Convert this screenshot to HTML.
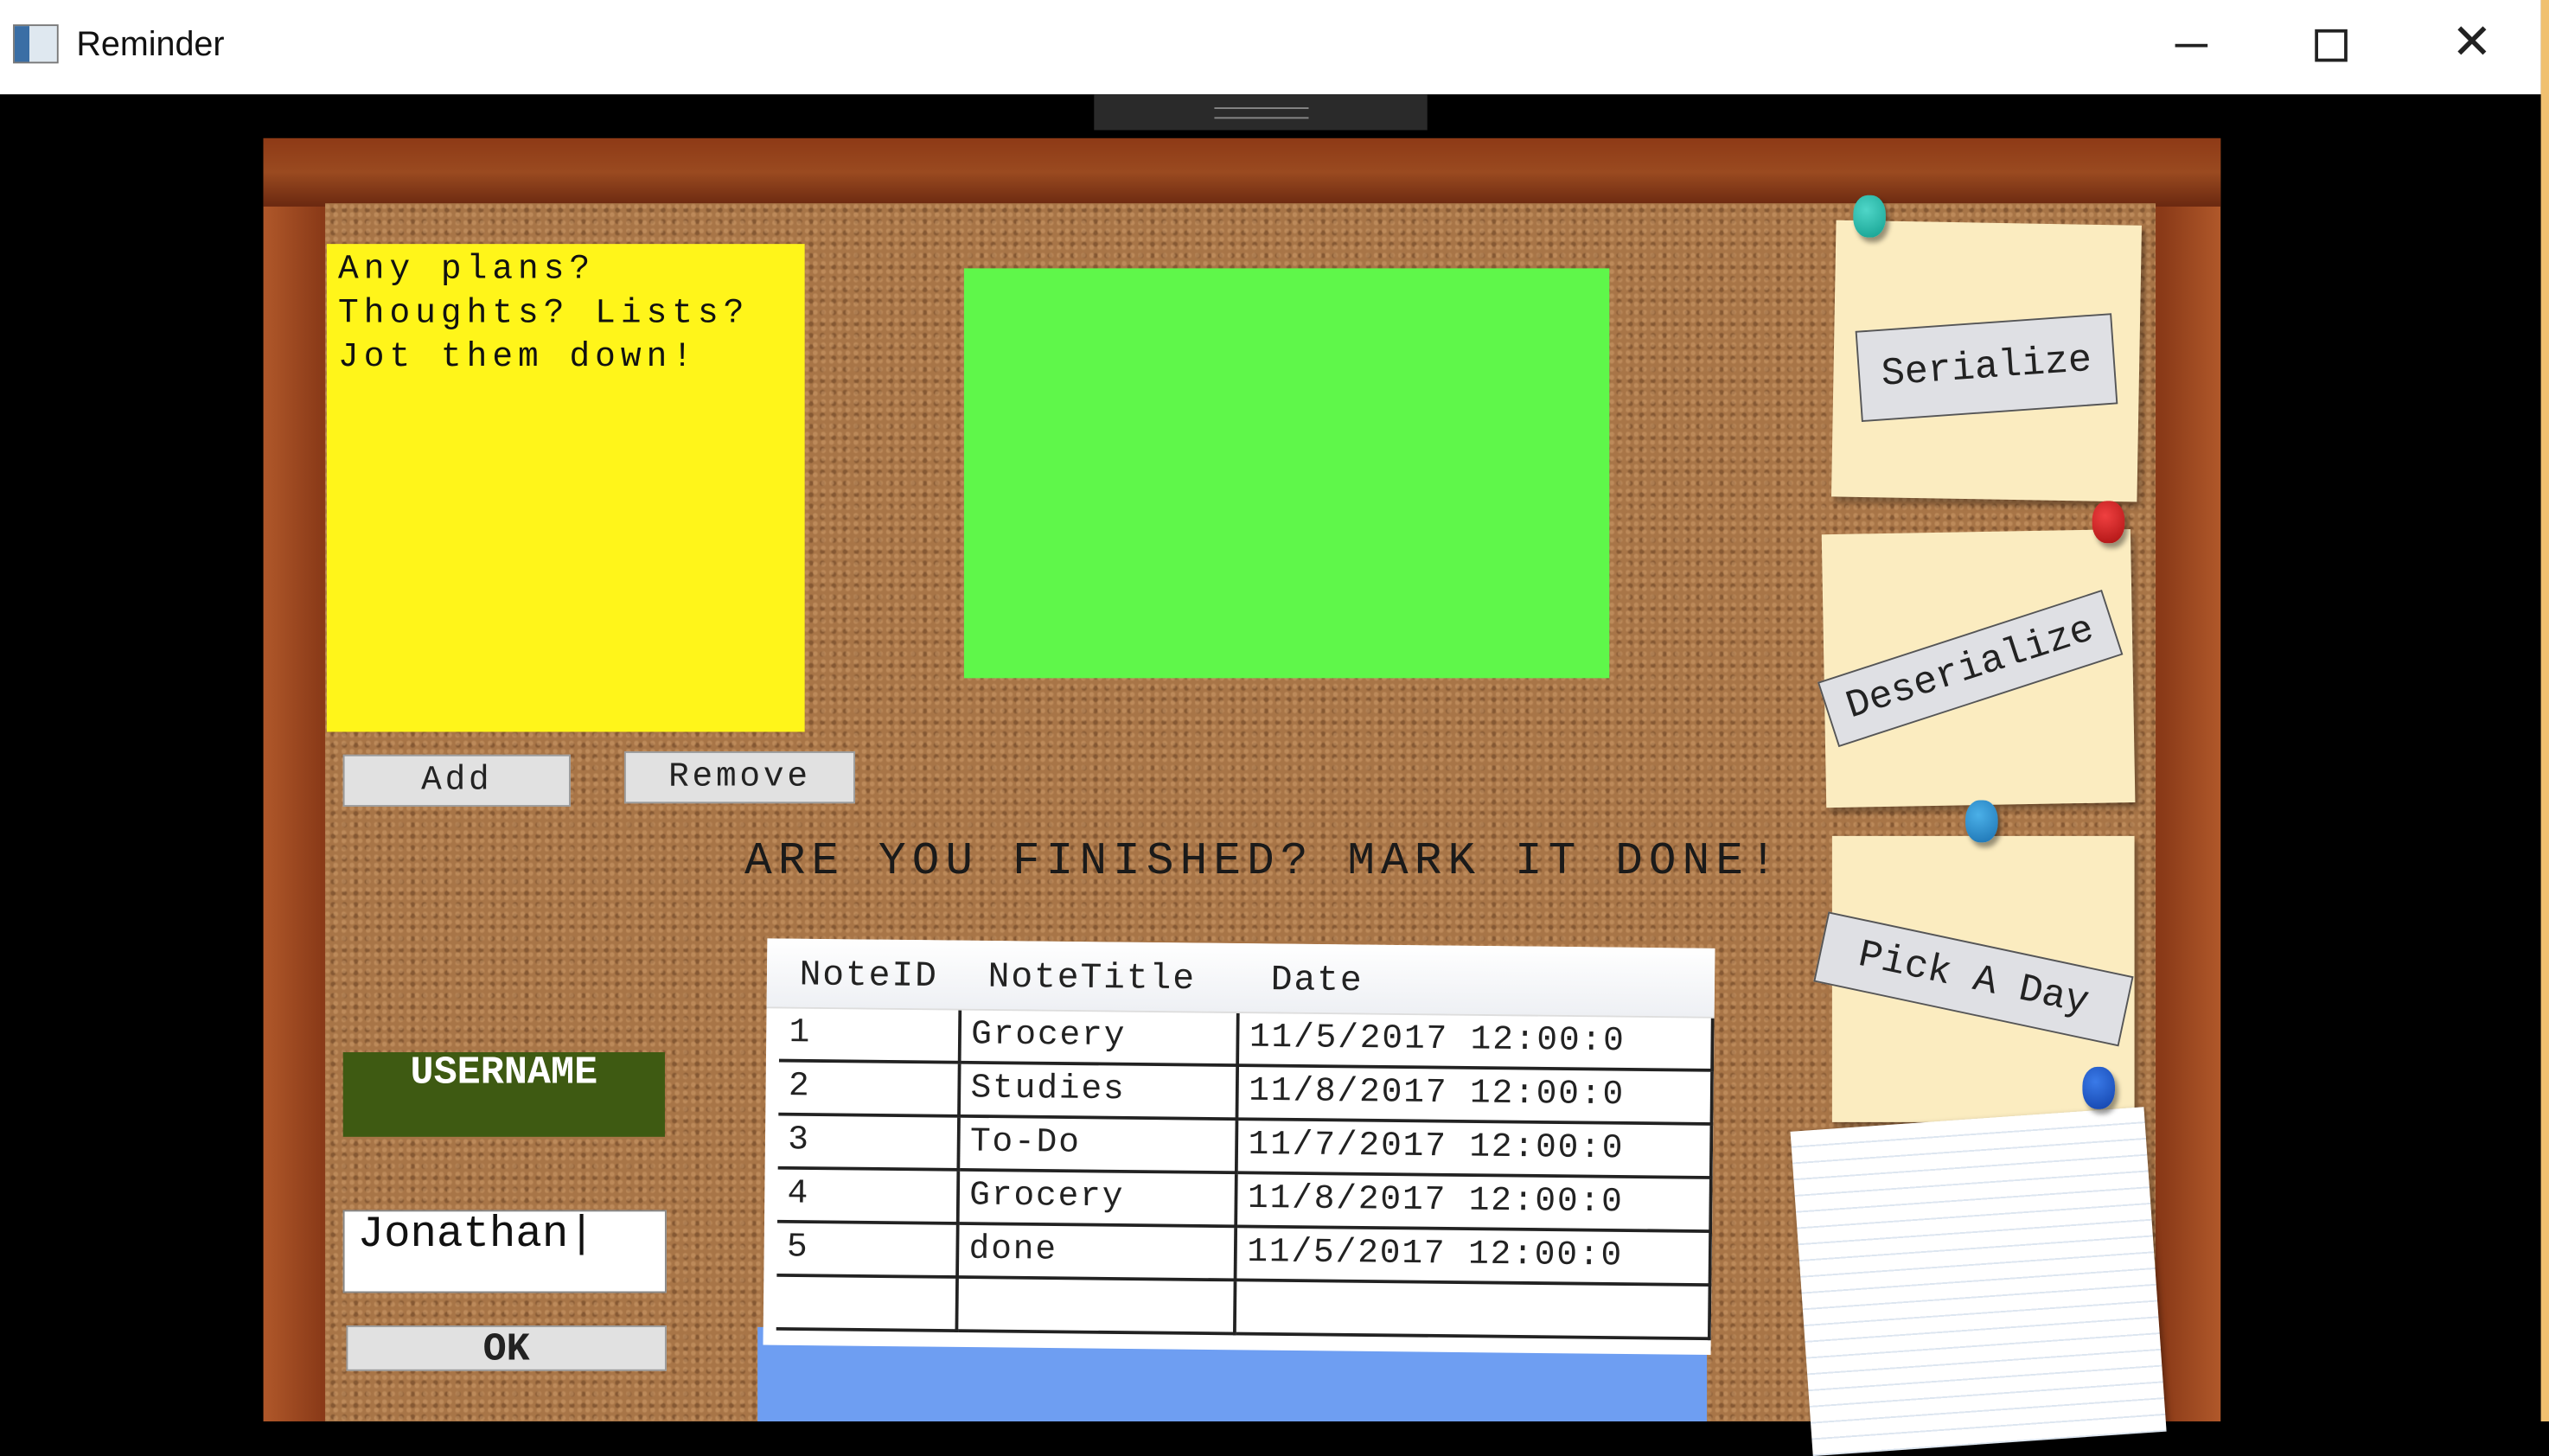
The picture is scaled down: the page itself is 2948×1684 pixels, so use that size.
<!DOCTYPE html>
<html><head><meta charset="utf-8"><style>
html,body{margin:0;padding:0;overflow:hidden;background:#000}
#w{position:absolute;left:0;top:0;width:1568px;height:874px;transform:scale(1.8801,1.881);transform-origin:0 0;background:#000;font-family:"Liberation Mono",monospace}
.a{position:absolute}
.btn{position:absolute;background:#e1e1e1;border:1px solid #9a9a9a;box-sizing:border-box;text-align:center;color:#222;font-family:"Liberation Mono",monospace}
.paper{position:absolute;background:#fbecc0;box-shadow:2px 3px 4px rgba(0,0,0,.35)}
.pin{position:absolute;width:20px;height:26px;border-radius:45%;box-shadow:2px 3px 3px rgba(0,0,0,.4)}
td{border-bottom:2px solid #222;border-right:2px solid #222;padding:0 6px;height:31px;font-size:21px;letter-spacing:1px;white-space:nowrap;overflow:hidden}
</style></head><body><div id="w">
<div class="a" style="left:0;top:0;width:1563px;height:58px;background:#fff"></div>
<div class="a" style="left:1563px;top:0;width:5px;height:874px;background:#f0c070"></div>
<div class="a" style="left:8px;top:15px;width:26px;height:22px;border:1px solid #777;background:linear-gradient(90deg,#3a6ea5 0 35%,#dfe8f0 35%)"></div>
<div class="a" style="left:47px;top:16px;font:21px 'Liberation Sans',sans-serif;color:#111">Reminder</div>
<div class="a" style="left:1338px;top:27px;width:20px;height:2px;background:#222"></div>
<div class="a" style="left:1424px;top:18px;width:16px;height:16px;border:2px solid #222"></div>
<div class="a" style="left:1508px;top:14px;font:30px 'Liberation Sans',sans-serif;color:#222;line-height:26px">✕</div>
<div class="a" style="left:673px;top:58px;width:205px;height:22px;background:#2a2a2a"></div>
<div class="a" style="left:747px;top:66px;width:58px;height:5px;border-top:1px solid #888;border-bottom:1px solid #888"></div>
<!-- frame -->
<div class="a" style="left:162px;top:85px;width:1204px;height:789px;background:linear-gradient(90deg,#b0582a,#8a3a18 3%,#8a3a18 97%,#b0582a);"></div>
<div class="a" style="left:162px;top:85px;width:1204px;height:42px;background:linear-gradient(180deg,#8e3a16,#9a4a20 50%,#6a2810);"></div>
<div class="a" style="left:200px;top:125px;width:1126px;height:749px;background:#a87547;background-image:radial-gradient(circle at 30% 40%,rgba(210,160,110,.5) 0 1px,transparent 2px),radial-gradient(circle at 70% 60%,rgba(80,45,20,.4) 0 1px,transparent 2px);background-size:5px 5px,7px 7px"></div>
<div class="a" style="left:201px;top:150px;width:294px;height:300px;background:#fff51a;font-size:21px;letter-spacing:3.2px;line-height:27px;padding:3px 7px;box-sizing:border-box;color:#111;white-space:pre">Any plans?
Thoughts? Lists?
Jot them down!</div>
<div class="a" style="left:593px;top:165px;width:397px;height:252px;background:#5ff74a"></div>
<div class="btn" style="left:211px;top:464px;width:140px;height:32px;font-size:21px;letter-spacing:2px;line-height:32px">Add</div>
<div class="btn" style="left:384px;top:462px;width:142px;height:32px;font-size:21px;letter-spacing:2px;line-height:32px">Remove</div>
<div class="a" style="left:458px;top:515px;font-size:28px;letter-spacing:3.8px;color:#1a1a1a">ARE YOU FINISHED? MARK IT DONE!</div>
<!-- table -->
<div class="a" style="left:466px;top:816px;width:584px;height:58px;background:#6e9ef2"></div>
<div class="a" style="left:472px;top:577px;width:583px;height:250px;background:#fff;transform:rotate(0.6deg);transform-origin:0 0;overflow:hidden">
<div style="height:42px;background:linear-gradient(#fff,#eef0f4);border-bottom:1px solid #ddd;font-size:22px;letter-spacing:1px;color:#222;line-height:46px;position:relative">
<span class="a" style="left:20px">NoteID</span><span class="a" style="left:136px">NoteTitle</span><span class="a" style="left:310px">Date</span></div>
<table style="border-collapse:collapse;margin-left:8px;color:#222">
<tr><td style="width:102px">1</td><td style="width:160px">Grocery</td><td style="width:280px">11/5/2017 12:00:0</td></tr>
<tr><td>2</td><td>Studies</td><td>11/8/2017 12:00:0</td></tr>
<tr><td>3</td><td>To-Do</td><td>11/7/2017 12:00:0</td></tr>
<tr><td>4</td><td>Grocery</td><td>11/8/2017 12:00:0</td></tr>
<tr><td>5</td><td>done</td><td>11/5/2017 12:00:0</td></tr>
<tr><td></td><td></td><td></td></tr>
</table></div>
<div class="a" style="left:211px;top:647px;width:198px;height:52px;background:#3e5a12;color:#fff;font:bold 24px 'Liberation Mono',monospace;text-align:center;line-height:28px">USERNAME</div>
<div class="a" style="left:211px;top:744px;width:199px;height:51px;background:#fff;border:1px solid #888;box-sizing:border-box;font-size:27px;padding-left:8px;line-height:30px;color:#111">Jonathan|</div>
<div class="btn" style="left:213px;top:815px;width:197px;height:28px;font:bold 24px 'Liberation Mono',monospace;line-height:30px">OK</div>
<!-- right notes -->
<div class="paper" style="left:1128px;top:137px;width:188px;height:170px;transform:rotate(1deg)"></div>
<div class="paper" style="left:1122px;top:327px;width:190px;height:168px;transform:rotate(-1deg)"></div>
<div class="paper" style="left:1127px;top:514px;width:186px;height:176px"></div>
<div class="a" style="left:1108px;top:688px;width:218px;height:200px;background:repeating-linear-gradient(180deg,#fff 0 9px,#dde6f0 9px 10px);transform:rotate(-4deg);box-shadow:1px 2px 4px rgba(0,0,0,.4)"></div>
<div class="btn" style="left:1143px;top:198px;width:158px;height:56px;font-size:24px;line-height:56px;transform:rotate(-4deg);background:#dfe0e4;border-color:#555">Serialize</div>
<div class="btn" style="left:1120px;top:390px;width:184px;height:42px;font-size:24px;line-height:42px;transform:rotate(-18deg);background:#dfe0e4;border-color:#555">Deserialize</div>
<div class="btn" style="left:1118px;top:580px;width:192px;height:44px;font-size:24px;line-height:44px;transform:rotate(12deg);background:#dfe0e4;border-color:#555">Pick A Day</div>
<div class="pin" style="left:1140px;top:120px;background:radial-gradient(circle at 40% 35%,#4fd6c8,#129e8e)"></div>
<div class="pin" style="left:1287px;top:308px;background:radial-gradient(circle at 40% 35%,#f04040,#a81010)"></div>
<div class="pin" style="left:1209px;top:492px;background:radial-gradient(circle at 40% 35%,#4bb0e8,#1a70b0)"></div>
<div class="pin" style="left:1281px;top:656px;background:radial-gradient(circle at 40% 35%,#3a7ae8,#1040a8)"></div>
</div></body></html>
